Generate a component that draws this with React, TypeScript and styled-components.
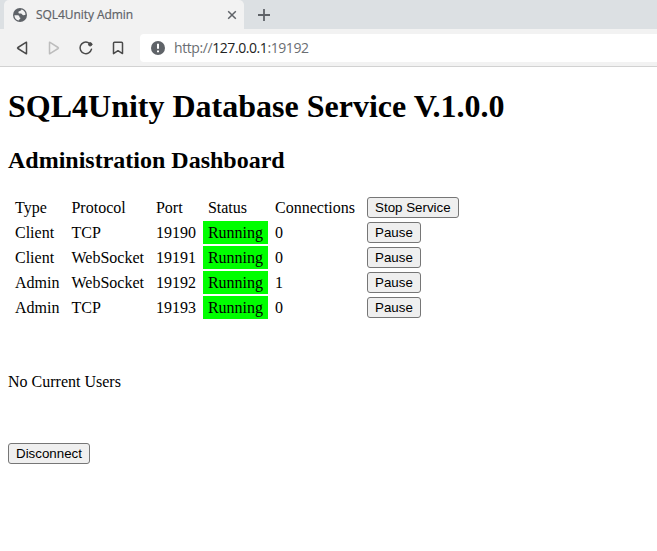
import React from "react";
import styled, { createGlobalStyle } from "styled-components";

const Global = createGlobalStyle`
  body { margin: 0; background: #fff; color: #000; overflow: hidden; font-family: "Liberation Serif", serif; font-size: 16px; }
`;
const Browser = styled.div`height: 551px; background: #fff;`;
const TabStrip = styled.div`display: flex; height: 29px; background: #dce0e3; padding-left: 4px;`;
const Tab = styled.div`
  display: flex; align-items: center; width: 240px; height: 29px; box-sizing: border-box; padding: 1px 7px 0 8px;
  border-radius: 5px 5px 0 0; background: #f2f2f2; color: #5f6368; font: 12px "Open Sans", sans-serif;
`;
const TabTitle = styled.span`
  flex: 1; margin-left: 8px; line-height: 28px; letter-spacing: -0.06px; -webkit-text-stroke: 0.2px #5f6368;
`;
const NewTab = styled.div`display: flex; align-items: center; margin-left: 13px; padding-top: 1px;`;
const Toolbar = styled.div`
  display: flex; align-items: center; height: 38px; box-sizing: border-box; padding-left: 14px;
  background: #f2f2f2; border-bottom: 1px solid #d2d2d2;
`;
const Nav = styled.div`display: flex; gap: 16px; width: 126px;`;
const Address = styled.div`
  display: flex; align-items: center; flex: 1; height: 28px; padding-left: 10px; border-radius: 4px 0 0 4px;
  background: #fff; color: #6b6e72; font: 14px "Open Sans", sans-serif;
`;
const Url = styled.span`margin-left: 8px; letter-spacing: -0.42px;`;
const Host = styled.span`color: #222;`;
const Page = styled.main`padding: 21px 8px 0;`;
const Title = styled.h1`margin: 0 0 22px; font-size: 32px; line-height: 37px;`;
const Subtitle = styled.h2`margin: 0 0 20px; font-size: 24px; line-height: 27px;`;
const Table = styled.table`border-spacing: 2px; border-collapse: separate;`;
const Cell = styled.td<{ $running?: boolean }>`
  padding: 1px 5px; height: 21px; line-height: 18px; background: ${(p) => (p.$running ? "#0f0" : "transparent")};
`;
const Button = styled.button`
  display: block; box-sizing: border-box; height: 21px; padding: 1px 7px; border: 1px solid #767676; border-radius: 3px;
  background: #efefef; color: #000; font: 13.333px "Liberation Sans", sans-serif;
`;
const Users = styled.p`margin: 52px 0; line-height: 18px;`;
const NavIcon = styled.svg<{ $muted?: boolean }>`
  width: 16px; height: 16px; fill: none; stroke: ${(p) => (p.$muted ? "#bdbdbd" : "#4a4a4a")};
  stroke-width: 1.5; stroke-linejoin: round; stroke-linecap: round;
`;

const rows = [
  ["Client", "TCP", "19190", "0"],
  ["Client", "WebSocket", "19191", "0"],
  ["Admin", "WebSocket", "19192", "1"],
  ["Admin", "TCP", "19193", "0"],
];

const Globe = () => (
  <svg width="16" height="16" viewBox="0 0 16 16">
    <circle cx="8" cy="8" r="7" fill="#5f6368" />
    <path
      d="M2.4 8.2h2.8c1.4 0 2.2.7 2.2 1.6 0 .6.2.9.9.9v.9c0 .8-.7 1-1.4 1v1C4.4 13.300 2.400 11.200 2.400 8.200z
         M9.300 2.500c-.1 1-.6 1.400-1.500 1.500-.9.1-1.400.5-1.400 1.300s.5 1.200 1.300 1.200h1.100c1.200 0 1.400 1.600 2.600 1.700 1 .1 1.500-.2 2.200-.8C13.300 4.800 11.700 3 9.300 2.500z"
      fill="#f2f2f2"
    />
  </svg>
);

export default function App() {
  return (
    <Browser>
      <Global />
      <TabStrip>
        <Tab>
          <Globe />
          <TabTitle>SQL4Unity Admin</TabTitle>
          <svg width="10" height="10" viewBox="0 0 10 10">
            <path d="M1.2 1.2l7.6 7.6M8.8 1.2L1.2 8.8" stroke="#5f6368" strokeWidth="1.5" />
          </svg>
        </Tab>
        <NewTab>
          <svg width="14" height="14" viewBox="0 0 14 14">
            <path d="M1 7h12M7 1v12" stroke="#5f6368" strokeWidth="1.8" />
          </svg>
        </NewTab>
      </TabStrip>
      <Toolbar>
        <Nav>
          <NavIcon viewBox="0 0 16 16"><path d="M12.5 2.600v10.800q0 .5-.5.2L3.900 8.500q-.7-.5 0-1L12 2.400q.5-.3.5.2z" /></NavIcon>
          <NavIcon viewBox="0 0 16 16" $muted><path d="M3.500 2.600v10.800q0 .5.5.2l8.100-5.100q.7-.5 0-1L4 2.400q-.5-.3-.5.2z" /></NavIcon>
          <NavIcon viewBox="0 0 16 16">
            <path d="M10.300 2.600A5.800 5.800 0 1 0 13.500 9.200" />
            <circle cx="12.200" cy="4.300" r="1.700" fill="#4a4a4a" strokeWidth="1" />
          </NavIcon>
          <NavIcon viewBox="0 0 16 16"><path d="M4.500 2.300h7q1 0 1 1v10.300L8 10.700l-4.500 2.900V3.300q0-1 1-1z" /></NavIcon>
        </Nav>
        <Address>
          <svg width="16" height="16" viewBox="0 0 16 16">
            <circle cx="8" cy="8" r="7" fill="#5f6368" />
            <path d="M8 3.800v5M8 10.500v1.800" stroke="#fff" strokeWidth="2" />
          </svg>
          <Url>http://<Host>127.0.0.1</Host>:19192</Url>
        </Address>
      </Toolbar>
      <Page>
        <Title>SQL4Unity Database Service V.1.0.0</Title>
        <Subtitle>Administration Dashboard</Subtitle>
        <Table>
          <tbody>
            <tr>
              {["Type", "Protocol", "Port", "Status", "Connections"].map((h) => <Cell key={h}>{h}</Cell>)}
              <Cell><Button>Stop Service</Button></Cell>
            </tr>
            {rows.map(([type, protocol, port, count]) => (
              <tr key={port}>
                <Cell>{type}</Cell><Cell>{protocol}</Cell><Cell>{port}</Cell>
                <Cell $running>Running</Cell><Cell>{count}</Cell>
                <Cell><Button>Pause</Button></Cell>
              </tr>
            ))}
          </tbody>
        </Table>
        <Users>No Current Users</Users>
        <Button>Disconnect</Button>
      </Page>
    </Browser>
  );
}
